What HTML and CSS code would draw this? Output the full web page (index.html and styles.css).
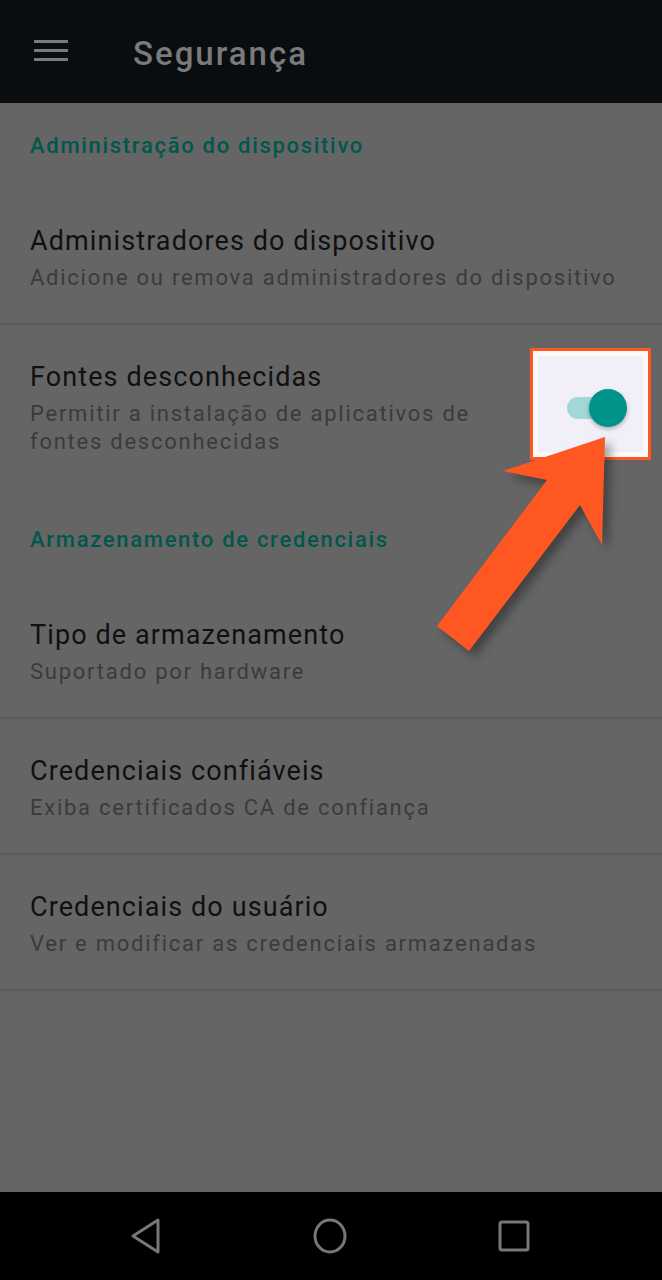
FILE: index.html
```html
<!DOCTYPE html>
<html lang="pt-BR">
<head>
<meta charset="utf-8">
<title>Segurança</title>
<link rel="stylesheet" href="styles.css">
</head>
<body>
<div class="screen">
  <header class="toolbar">
    <svg class="menu-icon" width="34" height="24" viewBox="0 0 34 24" aria-hidden="true">
      <rect x="0" y="1" width="34" height="3" fill="#7a7a7a"/>
      <rect x="0" y="10" width="34" height="3" fill="#7a7a7a"/>
      <rect x="0" y="19" width="34" height="3" fill="#7a7a7a"/>
    </svg>
    <h1 class="toolbar-title">Segurança</h1>
  </header>

  <main class="content">
    <div class="category category-first">Administração do dispositivo</div>

    <div class="pref">
      <div class="pref-title">Administradores do dispositivo</div>
      <div class="pref-summary">Adicione ou remova administradores do dispositivo</div>
    </div>

    <div class="pref pref-switch">
      <div class="pref-text">
        <div class="pref-title">Fontes desconhecidas</div>
        <div class="pref-summary">Permitir a instalação de aplicativos de fontes desconhecidas</div>
      </div>
      <div class="spotlight">
        <div class="switch">
          <span class="switch-track"></span>
          <span class="switch-thumb"></span>
        </div>
      </div>
    </div>

    <div class="category">Armazenamento de credenciais</div>

    <div class="pref">
      <div class="pref-title">Tipo de armazenamento</div>
      <div class="pref-summary">Suportado por hardware</div>
    </div>

    <div class="pref">
      <div class="pref-title">Credenciais confiáveis</div>
      <div class="pref-summary">Exiba certificados CA de confiança</div>
    </div>

    <div class="pref">
      <div class="pref-title">Credenciais do usuário</div>
      <div class="pref-summary">Ver e modificar as credenciais armazenadas</div>
    </div>
  </main>

  <nav class="navbar">
    <svg width="34" height="36" viewBox="0 0 34 36" aria-hidden="true">
      <path d="M4 18 L29 2 L29 34 Z" fill="none" stroke="#777" stroke-width="3" stroke-linejoin="round"/>
    </svg>
    <svg width="36" height="36" viewBox="0 0 36 36" aria-hidden="true">
      <ellipse cx="18" cy="18" rx="15" ry="16" fill="none" stroke="#777" stroke-width="3"/>
    </svg>
    <svg width="34" height="34" viewBox="0 0 34 34" aria-hidden="true">
      <rect x="3" y="3" width="28" height="28" rx="2" fill="none" stroke="#777" stroke-width="3"/>
    </svg>
  </nav>

  <svg class="arrow" width="200" height="250" viewBox="0 0 200 250" aria-hidden="true">
    <polygon points="185,17 83,51 127,60 17,206 49,231 160,85 182,125" fill="#ff5722"/>
  </svg>
</div>
</body>
</html>
```

FILE: styles.css
```css
* {
  box-sizing: border-box;
}

html, body {
  margin: 0;
  padding: 0;
}

body {
  background: #656565;
  font-family: Roboto, "Noto Sans", sans-serif;
}

.screen {
  position: relative;
  width: 662px;
  height: 1280px;
  display: flex;
  flex-direction: column;
  overflow: hidden;
}

.toolbar {
  height: 103px;
  flex: none;
  background: #0a0d10;
  display: flex;
  align-items: center;
  padding-left: 34px;
  gap: 65px;
}

.menu-icon {
  display: block;
  margin-top: -2px;
}

.toolbar-title {
  margin: 3px 0 0;
  font-size: 33px;
  font-weight: 500;
  color: #7a7a7a;
  letter-spacing: 2px;
}

.content {
  flex: 1;
  background: #656565;
}

.category {
  padding: 37px 30px 29px;
  font-size: 22px;
  line-height: 29px;
  font-weight: 500;
  color: #00574b;
  letter-spacing: 1.7px;
}

.category-first {
  padding-top: 28px;
}

.pref {
  padding: 34px 30px 31px;
  border-bottom: 2px solid #5b5b5b;
}

.pref-switch {
  position: relative;
  border-bottom: none;
  padding-bottom: 32px;
}

.pref-text {
  width: 470px;
}

.pref-title {
  font-size: 27px;
  line-height: 36px;
  color: #101010;
  letter-spacing: 1.1px;
}

.pref-summary {
  margin-top: 5px;
  font-size: 22px;
  line-height: 28px;
  color: #3b3b3b;
  letter-spacing: 1.75px;
}

.spotlight {
  position: absolute;
  left: 530px;
  top: 23px;
  width: 121px;
  height: 112px;
  border: 3px solid #ff5722;
  background: #f1f0f8;
  box-shadow: inset 0 0 0 5px #fafafa;
}

.switch {
  position: absolute;
  left: 34px;
  top: 37px;
  width: 64px;
  height: 40px;
}

.switch-track {
  position: absolute;
  left: 0;
  top: 9px;
  width: 50px;
  height: 22px;
  border-radius: 11px;
  background: #a2d7d7;
}

.switch-thumb {
  position: absolute;
  left: 22px;
  top: 1px;
  width: 38px;
  height: 38px;
  border-radius: 50%;
  background: #009389;
  box-shadow: 0 2px 4px rgba(0, 0, 0, 0.3);
}

.navbar {
  height: 88px;
  flex: none;
  background: #000;
  display: flex;
  align-items: center;
  justify-content: space-between;
  padding: 0 131px 0 129px;
}

.arrow {
  position: absolute;
  left: 420px;
  top: 420px;
  filter: drop-shadow(6px 6px 5px rgba(0, 0, 0, 0.35));
}
```
